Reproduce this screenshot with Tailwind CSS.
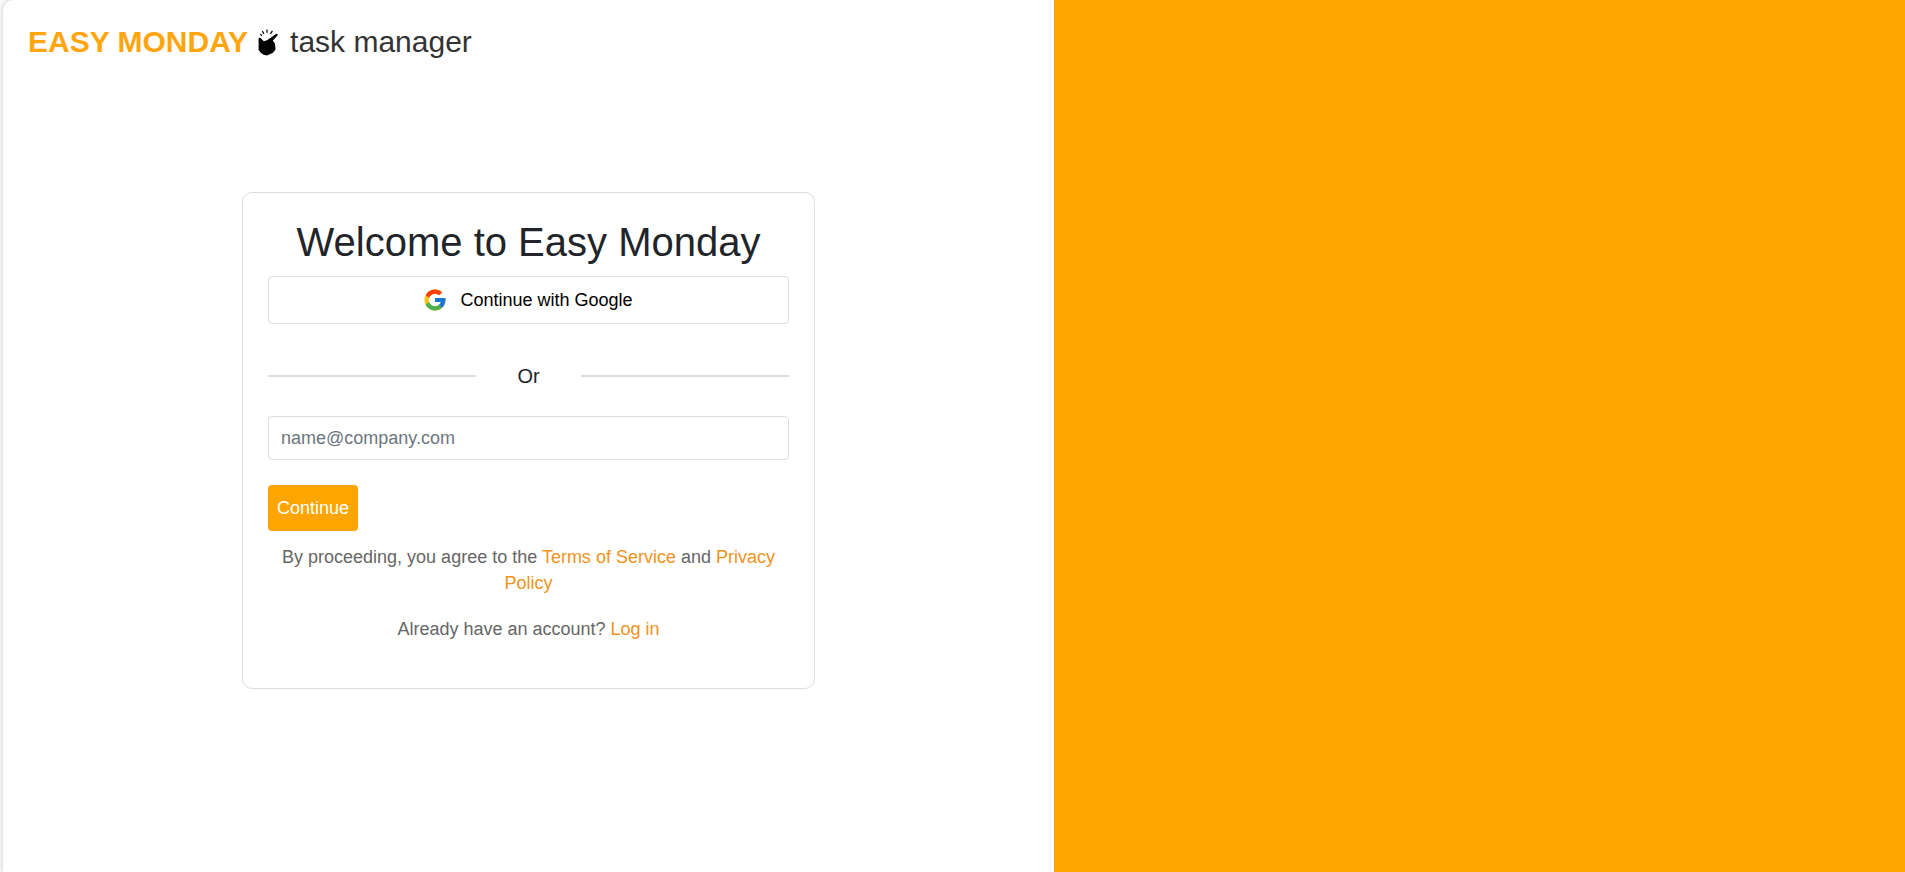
<!DOCTYPE html>
<html lang="en">
<head>
<meta charset="utf-8">
<meta name="viewport" content="width=device-width, initial-scale=1">
<title>Easy Monday</title>
<script src="https://cdn.jsdelivr.net/npm/@tailwindcss/browser@4"></script>
</head>
<body class="bg-[#f9f9f9] font-['Liberation_Sans',Arial,sans-serif] text-lg leading-[26px] text-[#212529]">
<div class="grid min-h-screen grid-cols-[1051fr_851fr] pl-[3px]">
  <main class="flex flex-col rounded-tl-[10px] bg-white px-[25px] pt-6 shadow-[0_0_5px_rgba(0,0,0,0.2)]">
    <header class="flex items-center text-3xl leading-9 text-[#333]">
      <span class="font-bold text-[#ffa510]">EASY MONDAY</span>
      <svg class="mr-3 ml-2.5 h-[27px] w-5 shrink-0" viewBox="0 0 20 27" aria-hidden="true">
        <path d="M0.600 9.500Q1.500 8.200 3 9.500L5.800 12.300L9 11.200L18 4.900Q20.300 4.300 19.400 6.500L14.800 11.800L17 14.500L17.500 20.500L15 23.800L9 26.400Q5.500 26.300 3 24L0.600 21Z" fill="#000"/>
        <path d="M9 0.500V3.800M4.300 2L5.900 4.900M14.400 1.800L12.400 4.900M2.300 5.300L4 6.600" stroke="#000" stroke-width="1.200" fill="none"/>
      </svg>
      <span>task manager</span>
    </header>
    <section class="mx-auto mt-[132px] mb-8 w-full max-w-[573px] rounded-[10px] border border-[#ddd] px-[25px] pt-[25px] pb-[46px]">
      <h1 class="text-center text-[40px] leading-12">Welcome to Easy Monday</h1>
      <button type="button" class="mt-[10px] flex h-12 w-full items-center justify-center gap-[14px] rounded border border-[#ddd] bg-white text-black">
        <svg class="size-[22px]" viewBox="3 3 42 42" aria-hidden="true">
          <path fill="#FFC107" d="M43.6 20H24v8h11.3C33.7 32.7 29.2 36 24 36c-6.600 0-12-5.400-12-12s5.400-12 12-12c3.100 0 5.800 1.200 8 3l5.700-5.600C34 6.100 29.300 4 24 4 13 4 4 13 4 24s9 20 20 20 20-9 20-20c0-1.300-.1-2.700-.4-4z"/>
          <path fill="#FF3D00" d="M6.300 14.700l6.600 4.800C14.700 15.100 19 12 24 12c3.100 0 5.800 1.200 8 3l5.700-5.600C34 6.100 29.300 4 24 4 16.300 4 9.700 8.300 6.300 14.700z"/>
          <path fill="#4CAF50" d="M24 44c5.200 0 9.900-2 13.400-5.200l-6.200-5.200C29.200 35.100 26.700 36 24 36c-5.200 0-9.600-3.300-11.300-8l-6.500 5C9.500 39.600 16.200 44 24 44z"/>
          <path fill="#1976D2" d="M43.600 20H24v8h11.300c-.8 2.200-2.200 4.200-4.100 5.600l6.200 5.200C37 39.200 44 34 44 24c0-1.300-.1-2.700-.4-4z"/>
        </svg>
        <span>Continue with Google</span>
      </button>
      <div class="mt-10 flex h-6 items-center text-xl">
        <div class="h-0.5 flex-[2] bg-[#ddd]"></div>
        <span class="flex-1 text-center">Or</span>
        <div class="h-0.5 flex-[2] bg-[#ddd]"></div>
      </div>
      <form>
        <input type="email" aria-label="Email" placeholder="name@company.com" class="mt-7 block h-11 w-full rounded border border-[#ddd] bg-white px-3 placeholder:text-[#6c757d]">
        <button type="submit" class="mt-[25px] block h-[46px] rounded bg-[#ffa500] px-[9px] text-white">Continue</button>
      </form>
      <p class="mt-[13px] text-center text-[#666]">By proceeding, you agree to the <a href="#" class="text-[#f0931b]">Terms of Service</a> and <a href="#" class="text-[#f0931b]">Privacy Policy</a></p>
      <p class="mt-5 text-center text-[#666]">Already have an account? <a href="#" class="text-[#f0931b]">Log in</a></p>
    </section>
  </main>
  <aside class="relative bg-[#ffa500]"></aside>
</div>
</body>
</html>
